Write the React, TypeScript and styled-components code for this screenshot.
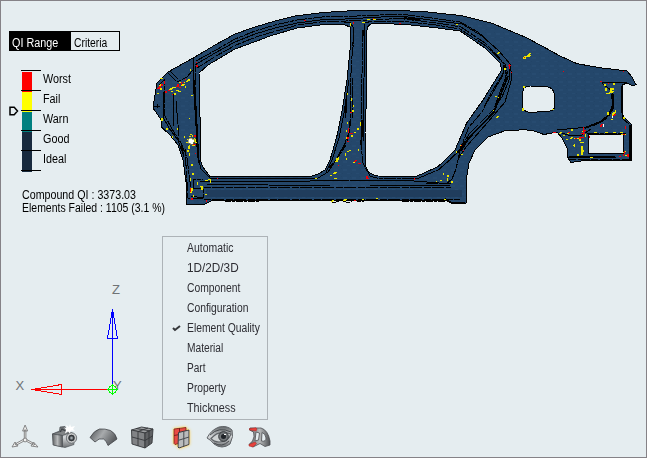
import React from "react";
import styled, { createGlobalStyle } from "styled-components";

const GlobalStyle = createGlobalStyle`
  * { box-sizing: border-box; }
  body { margin: 0; background: #e5edf0; overflow: hidden; }
`;

const Frame = styled.main`
  width: 647px;
  height: 458px;
  border: 1px solid #858287;
  background: #e5edf0;
  color: #000;
  font: 12px/13px "Liberation Sans", Arial, sans-serif;
  white-space: nowrap;
  overflow: hidden;
`;
const Condensed = styled.span<{ $width: number }>`
  display: inline-block;
  transform: scaleX(${(p) => p.$width});
  transform-origin: left center;
`;
const ModelView = styled.section`
  display: flex;
  height: 235px;
`;
const QualityPanel = styled.div`
  width: 149px;
  flex: none;
  padding: 30px 0 0 8px;
`;
const Tabs = styled.div`
  display: flex;
  width: 111px;
  height: 20px;
  border: 1px solid #000;
  background: #e5edf0;
`;
const Tab = styled.div<{ $active?: boolean }>`
  width: ${(p) => (p.$active ? 61 : 48)}px;
  flex: none;
  padding: 4px 0 0 ${(p) => (p.$active ? 2 : 3)}px;
  line-height: 14px;
  background: ${(p) => (p.$active ? "#000" : "transparent")};
  color: ${(p) => (p.$active ? "#fff" : "#000")};
`;
const Legend = styled.div`
  display: flex;
  margin-top: 19px;
  height: 101px;
`;
const Scale = styled.svg`
  display: block;
  width: 33px;
  height: 103px;
`;
const Labels = styled.div`
  padding-left: 1px;
  line-height: 18px;
`;
const Label = styled.div`
  height: 20px;
`;
const Stats = styled.div`
  margin: 18px 0 0 13px;
`;
const Stat = styled.div`
  height: 13px;
`;
const CarDrawing = styled.svg`
  display: block;
  flex: none;
`;
const Lower = styled.section`
  display: flex;
  height: 184px;
`;
const Axes = styled.svg`
  display: block;
  flex: none;
`;
const Menu = styled.ul`
  width: 106px;
  height: 184px;
  margin: 0;
  padding: 1px 0;
  border: 1px solid #adb3b7;
  list-style: none;
  color: #2d2d33;
`;
const MenuItem = styled.li`
  display: flex;
  align-items: center;
  height: 20px;
  line-height: 20px;
`;
const CheckSlot = styled.span`
  display: flex;
  flex: none;
  width: 24px;
  padding-left: 9px;
`;
const Toolbar = styled.nav`
  display: flex;
  height: 36px;
  padding: 3px 0 0 4px;
`;
const ToolButton = styled.div`
  width: 39px;
  height: 28px;
  display: flex;
  justify-content: center;
`;

const bands = [
  { name: "Worst", color: "#ff0000" },
  { name: "Fail", color: "#ffff00" },
  { name: "Warn", color: "#008080" },
  { name: "Good", color: "#182a3e" },
  { name: "Ideal", color: "#182a3e" },
];

const menuItems: [string, number][] = [
  ["Automatic", 0.87],
  ["1D/2D/3D", 0.98],
  ["Component", 0.86],
  ["Configuration", 0.86],
  ["Element Quality", 0.86],
  ["Material", 0.85],
  ["Part", 0.84],
  ["Property", 0.86],
  ["Thickness", 0.9],
];

const body =
  "M153 108L155 95 157 83 168 72 195 57 215 45 235 34 255 27 275 21 295 16 323 12.5 347 11 400 10.5 428 12 462 15.7 492 23.3 525 37 542 46 560 56 577 63.7 600 67.7 627 71 632 77 636 84.5 633 86 627 83 622 85 622 113 624 117 631 124 631 160.5 583 160.7 571 162.5 568 158 567 148 562 138 557 132 544 134.5 534 131 525 129.7 505 130.7 488 137 475 150 469 163 466.7 177 466 203.5 450 202.5 445 200 232 200.5 213 200 205 204 187 204.7 186.7 187 183 160 178 145 170 135 161 126.7 162 121Z";
const openings =
  "M270 36L297 28 320 25 344 24.5 350 27 351 32 350 50 347 80 341.7 113 336.7 137 330 160 325 170 317 174.5 310 176.7 210 176.5 203 167 200 160 200 117 199 73 208 65 235 49 255 41.7Z " +
  "M367 30Q367 24 374 23.5L405 24.3 438 28 460 31 485 48 500 63 501.7 70 483 100 466.7 123 455 150 438 166.7 421.7 174 415 176.7 378 176Q365 174 365 161L365 133 366.7 93Z " +
  "M524 88Q526 86 530 86L547 86.5Q553 88 554.5 94L554.5 108Q552 112 545 111.5L529 112.5Q523 111 522 106L522 94Z " +
  "M588.5 134.5L623.5 134.5 623.5 153.5 588.5 153.5Z";

const seams = [
  "M195 65L215 53 235 42 255 34 275 28 297 23 320 20 345 19 400 16 438 21 462 24 482 36 499 51 510 64 512 78 505 102 488 122 466 147 458 159",
  "M197 68L216 56 236 45 256 37 276 31 298 25 320 22 346 21 400 18.5 437 23 461 27 485 43 505 64 508 74",
  "M196 61L216 50 235 39 255 31 275 25 297 20 322 17 347 16.5 400 14 432 18 460 22 478 32 488 41",
  "M194 58L193 78 195 110 198 158 201 169 210 178 318 178 328 172 336 160 345 143 350 130",
  "M195 65L196 110 199 162",
  "M168 73L177 82 187 77 194 69M170 71L179 80M159 85L164 80 164 92 165 116 172 129 181 143 187 158 191 190",
  "M163 92L163 117 169 128 178 140 184 157M173 94L174 126M176 101L179 136",
  "M154 106L160 106M157 104L157 108M181 144L184 155M185 149L188 198 205 198",
  "M190 188L203 189 203 198M191 196L203 198M193 188L193 179 203 179",
  "M200 181L310 181 350 180 402 180 451 184M206 184L330 186 370 186 451 185M210 178L310 178",
  "M204 187L318 187 451 187M204 199L330 199 460 200",
  "M354 29L352 56 350 91 350 126",
  "M349 80L344 113 339 138 332 160 326 172M345 99L345 118M347 93L346 113",
  "M352 78L352 118M350 121L348 139 341 151M346 145L337 159 327 170",
  "M363 30L362 74 361 145 363 163 370 176 380 179 419 178 440 169 457 153 471 136 494 113 500 92 507 75 504 65",
  "M365 29L364 78 363 143 363 163",
  "M372 21L365 23 363 37M344 22L350 22 354 29 353 48",
  "M374 21L400 21 436 25 460 29 486 46 503 63 504 72 491 93 482 112 469 127 460 149 450 160 439 169",
  "M503 75L489 99 484 107M509 67L510 78 502 97 496 105 493 114 467 140 460 151",
  "M505 67L505 79 499 95 494 109 469 134 458 153",
  "M460 151L456 169 452 179 446 184M426 183L451 184",
  "M602 84L602 82 627 83M603 84L612 91 613 104 609 115 599 123 588 127 557 130",
  "M611 94L614 108 605 120 593 126M622 85L622 118 630 125 630 159 570 159",
  "M568 157L617 157M587 133L626 133",
  "M562 133L571 136 582 135 591 129M623 85L627 83",
];

/* Failed elements: x, y, width, height in model view pixels. */
const yellow =
  "159,84,4,2 160,88,2,2 169,88,4,2 172,87,4,1 181,84,4,2 186,80,3,2 188,79,2,2 160,78,3,1 174,93,2,2 178,91,3,1 183,82,2,1 185,86,1,2 190,69,1,2 157,93,2,1 171,91,2,1 176,90,3,1 179,82,3,1 161,118,2,3 166,128,2,2 172,136,1,2 177,128,1,2 188,146,2,3 187,150,2,2 189,153,1,3 191,164,2,2 192,173,2,2 190,178,1,3 197,182,1,3 201,187,2,3 191,188,2,3 190,191,2,2 205,180,3,1 210,180,1,3 193,195,1,2 205,194,2,1 184,136,1,2 194,139,2,3 189,118,1,1 191,95,2,1 190,134,2,1 200,186,3,1 208,179,3,1 347,93,1,2 351,98,1,3 352,110,2,2 347,122,1,2 353,105,1,2 360,122,1,4 357,128,2,2 354,132,2,1 346,137,2,2 346,130,1,2 351,135,2,2 347,151,2,1 345,153,1,3 346,158,1,2 338,157,1,3 335,161,3,1 336,158,2,4 333,172,4,2 330,175,2,1 334,178,3,1 349,150,2,1 353,162,2,1 358,149,1,2 331,200,3,2 343,199,4,2 362,199,2,1 376,198,2,1 350,23,1,3 362,22,3,1 367,19,3,1 373,19,3,1 456,24,2,1 497,52,3,2 504,68,2,2 495,96,2,1 498,97,1,1 493,110,1,1 496,116,3,2 460,145,2,1 461,154,2,1 456,151,1,2 443,173,1,2 447,175,2,2 451,181,2,2 436,181,1,1 440,180,2,1 447,178,1,3 315,178,2,1 444,199,2,1 523,56,4,3 526,55,5,2 528,53,3,4 522,108,2,3 523,86,2,2 552,109,2,1 604,84,2,2 605,88,2,3 609,91,5,2 612,88,2,2 606,93,4,1 610,88,2,3 613,83,2,2 612,112,4,4 615,110,1,2 607,112,2,3 611,119,2,1 623,117,2,2 574,138,5,1 579,138,2,3 581,146,2,9 582,131,3,1 585,134,1,3 574,144,1,3 567,132,3,2 559,132,3,2 570,137,3,2 563,135,2,1 566,139,2,1 571,129,2,2 594,132,3,1 605,132,3,1 613,132,3,1 620,132,3,1 621,134,5,1 623,151,3,2 625,155,4,1 577,154,2,2 573,145,2,1 590,157,3,1 580,142,4,1 583,150,1,2";
const red =
  "157,87,4,2 159,86,2,1 164,81,1,3 161,84,2,2 165,91,2,2 177,84,2,2 179,87,2,1 181,82,1,3 196,65,2,2 172,94,1,1 168,90,2,1 176,86,3,1 193,144,3,1 194,135,2,2 195,153,1,1 217,178,1,1 190,188,1,4 191,198,2,2 206,200,1,2 353,22,1,2 304,20,2,1 373,18,1,1 350,112,2,1 348,128,1,5 350,133,3,1 347,141,2,1 347,137,2,2 338,165,1,1 354,160,3,2 358,163,3,1 366,176,2,3 367,178,2,1 354,200,2,1 508,65,3,1 509,64,1,5 524,57,1,1 563,71,1,1 511,72,1,1 461,145,1,1 463,150,1,1 600,81,2,1 608,83,1,1 613,114,3,2 623,134,2,1 583,127,1,8 581,133,4,1 583,130,3,2 580,137,4,1 600,124,3,3 625,126,1,3 624,151,1,3 627,154,2,3 619,156,2,1 589,136,1,2 579,137,2,2 575,138,2,1 568,132,2,1 553,132,3,1 623,154,1,2 414,178,1,2 399,23,2,1 623,71,1,1 183,82,1,1 185,79,1,1 196,62,1,1";

function Marks({ data, fill }: { data: string; fill: string }) {
  return (
    <g fill={fill}>
      {data.split(" ").map((mark, i) => {
        const [x, y, width, height] = mark.split(",").map(Number);
        const skip = width > 2 && height > 1 ? 1 : 0;
        return <path key={i} d={`M${x + skip} ${y}h${width - skip}v1h${-skip}v${height - 1}h${skip - width}v${1 - height}h${skip}z`} />;
      })}
    </g>
  );
}

function CarSide() {
  return (
    <CarDrawing width="495" height="219" viewBox="150 1 495 219" shapeRendering="crispEdges">
      <defs>
        <pattern id="mesh" width="9" height="8" patternUnits="userSpaceOnUse">
          <path fill="#24476b" d="M0 0h9v8H0z" />
          <path fill="#274b70" d="M1 1h4v2H1zM5 5h3v1H5z" />
          <path fill="#224467" d="M8 0h1v1H8zM0 5h1v1H0z" />
        </pattern>
      </defs>
      <path d={body + openings} fill="url(#mesh)" fillRule="evenodd" />
      <path d="M206 193H462" stroke="#203d5d" strokeWidth="7" />
      <g fill="none" stroke="#000">
        <path d={body + openings} />
        {seams.map((d, i) => (
          <path key={i} d={d} strokeDasharray={i % 3 === 1 ? "7 1 12 2" : i % 3 === 2 ? "12 1 4 1" : undefined} />
        ))}
        <path d="M194 80L196 111 198 150M363 120L361 145M508 76L494 112 468 139 461 151M404 18L420 20M197 143L199 163M613 94V105L609 115 600 122 585 128M622 86V113M630 125V159M569 157L615 157" strokeWidth="1.7" />
        <path d="M213 201L220 199 228 202 235 201 260 201 311 200M322 201L328 199 334 203 341 200 348 203 354 200 361 202 367 200 390 200 402 201 445 201" strokeDasharray="7 1 3 1" />
        <path d="M445 199L452 203H465" strokeWidth="1.5" />
      </g>
      <Marks data={yellow} fill="#e8e500" />
      <Marks data={red} fill="#f20008" />
      <path d="M187 139h1v1h-1zM189 136h2v1h-2zM192 135h1v2h-1zM194 138h1v1h-1zM195 142h2v1h-2zM186 142h2v1h-2zM189 145h1v2h-1zM192 145h3v1h-3z" fill="#e8dd00" />
      <path d="M189 138h3v1h2v3h-1v2h-3v-1h-2v-4h1z" fill="#fff" stroke="#8b862c" strokeWidth=".6" />
      <path d="M603 124h1v3h-1zM612 116h1v2h-1z" fill="#fff" />
    </CarDrawing>
  );
}

function LegendScale() {
  return (
    <Scale viewBox="9 70 33 103" shapeRendering="crispEdges">
      {bands.map((band, i) => (
        <rect key={band.name} x="22" y={72 + i * 20} width="10" height="20" fill={band.color} />
      ))}
      {[0, 1, 2, 3, 4, 5].map((i) => (
        <rect key={i} x="21" y={70 + i * 20} width="20" height="1" />
      ))}
      <path d="M10 107.2h4.2l3.3 3.8-3.3 3.8H10z" fill="#e5edf0" stroke="#000" strokeWidth="1.5" shapeRendering="geometricPrecision" />
    </Scale>
  );
}

function AxisTriad() {
  return (
    <Axes width="161" height="184" viewBox="1 236 161 184" shapeRendering="crispEdges">
      <g fill="none" strokeWidth="1">
        <path stroke="#00f" d="M112.5 310V389M112.5 309L107.5 338.5H117.5ZM111.5 313V318M113.5 313V318" />
        <path stroke="red" d="M31 389.5H112M35 389L61.5 384.5V394.5L35 390M35 388.5H41M35 390.5H41" />
      </g>
      <g fill="#6f7376" fontFamily="Liberation Sans" fontSize="13" shapeRendering="geometricPrecision">
        <text x="112" y="294" textLength="8" lengthAdjust="spacingAndGlyphs">Z</text>
        <text x="15.5" y="390">X</text>
        <text x="113" y="390">Y</text>
      </g>
      <path d="M107 389.5H118M112.5 384V395M112.5 384.5L117.5 389.5 112.5 394.5 107.5 389.5Z" fill="none" stroke="#0f0" shapeRendering="geometricPrecision" />
      <path d="M109 386h1v1h-1zM115 386h1v1h-1zM109 392h1v1h-1zM115 392h1v1h-1z" fill="#0f0" />
    </Axes>
  );
}

function ToolIcon({ kind }: { kind: number }) {
  return (
    <svg width="30" height="28" viewBox="0 0 30 28" overflow="visible">
      {kind === 0 && (
        <g fill="#f1f1ef" stroke="#7a7b7c" strokeWidth=".9">
          <path d="M14.3 7h1.6v10h-1.6zM14 16l-9 5 1 1.3 9-4.8zM15 17.5l9 4.8.8-1.3-9-5zM12.6 8l2.5-6 2.5 6zM2 24l3-5 3 4zM28 24l-4.5-5-2.5 4z" />
          <circle cx="15.1" cy="17" r="1.9" />
        </g>
      )}
      {kind === 1 && (
        <g stroke="#4c5055" strokeWidth=".7">
          <path fill="url(#metal)" d="M3.5 11l7-3 .5-4 5-.5 2 4 6 3 1 11-9 3-11-2.5z" />
          <path fill="#828587" d="M3.5 11l10 1.5 8-3-7-2z" />
          <path fill="url(#steel)" d="M3.5 11l10 1.5V24l-9.5-2z" />
          <path fill="none" stroke="#3b3f43" strokeWidth="1.2" d="M11 9l2-3 4 2" />
          <circle cx="22.5" cy="15" r="5.2" fill="#c9cccd" />
          <circle cx="22.5" cy="15" r="3.8" fill="#303438" stroke="#eee" />
          <circle cx="22.5" cy="15" r="1.7" fill="#9da5aa" />
          <path fill="#fff" stroke="none" d="M17 2l3 2 1-3 1 3 4-1-2 3 2 2-4-.5-1 3-2-2-3 2 1-4-2-2 3 .5z" />
        </g>
      )}
      {kind === 2 && (
        <path fill="url(#sheet)" stroke="#404346" strokeWidth=".8" strokeLinejoin="round" d="M2 14.5Q6 7.5 11.5 6Q17 5.5 22.5 7.5Q27.5 10 29 16L20 22.5Q18.5 17.5 15.5 16Q11 14.5 7 19Z" />
      )}
      {kind === 3 && (
        <g stroke="#36383b" strokeWidth=".9">
          <path fill="#9b9d9f" d="M4.5 7l10-3 11.5 2-8 4z" />
          <path fill="#818386" d="M4.5 7L18 10v15l-13-4z" />
          <path fill="#5f6164" d="M18 10l8-4-1 14-7 5z" />
          <path fill="none" d="M11 8.5V23M22 8v14M5 14l13 3.5 7.5-4.5M9 5.5l13.5 2.3M21 5l-10 3.5" />
        </g>
      )}
      {kind === 4 && (
        <g strokeWidth="1" filter="url(#selected)">
          <path fill="#e84a42" stroke="#8b2723" d="M8 6l12-1.5v14L9 21.5l-1-1z" />
          <path fill="none" stroke="#7b1d1e" d="M13.5 5v14M8 12.5l11-2" />
          <path fill="#b9bbbc" stroke="#373c41" d="M12.5 9.5L23 7v14.5l-10 3.5-1-1z" />
          <path fill="none" stroke="#484c50" d="M17.8 8.5v15M12.5 17.3L23 14" />
        </g>
      )}
      {kind === 5 && (
        <g fill="none" stroke="#606468">
          <path fill="url(#metal)" d="M2 15Q6 7 14 4Q22 2 27 7Q29 13 25 21Q17 27 9 21Q6 17 2 15Z" />
          <path fill="#cfd3d4" strokeWidth="1.2" d="M6 15.5Q14 6 26 11Q23 19 14 19Q9 19 6 15.5Z" />
          <circle cx="18.5" cy="13.5" r="4.8" fill="#73777a" stroke="#34383b" />
          <circle cx="18.5" cy="13.5" r="2.5" fill="#202429" stroke="none" />
          <path stroke="#fff" d="M19 11.5h2" />
          <path stroke="#474b4e" strokeWidth="1" d="M5 12Q14 3 26 9M9 20Q17 25 24 18" />
        </g>
      )}
      {kind === 6 && (
        <g stroke="#4b4d50" strokeWidth=".8">
          <path fill="url(#steel)" fillRule="evenodd" d="M6 5H17Q24 7 26 18V22L21 23.5 16 20.5 9 24 5 21.5 8.5 18Q11 14 9.5 9L5.5 7ZM12 9L11 18 14.5 17 15.5 10ZM18 9.5L17.5 18Q22 19 22 15 21.5 10.5 18 9.5Z" />
          <path fill="#e7423c" stroke="#a42827" strokeWidth=".5" d="M5.5 5.5L12 4.8l1 1.2-1 2-6.5-1zM5 21.5L11 19l1.5 1.5L9 24l-4-1z" />
        </g>
      )}
    </svg>
  );
}

export default function App() {
  return (
    <Frame>
      <GlobalStyle />
      <ModelView>
        <QualityPanel>
          <Tabs>
            <Tab $active><Condensed $width={0.9}>QI Range</Condensed></Tab>
            <Tab><Condensed $width={0.86}>Criteria</Condensed></Tab>
          </Tabs>
          <Legend>
            <LegendScale />
            <Labels>{bands.map((band) => <Label key={band.name}><Condensed $width={0.9}>{band.name}</Condensed></Label>)}</Labels>
          </Legend>
          <Stats>
            <Stat><Condensed $width={0.89}>Compound QI : 3373.03</Condensed></Stat>
            <Stat><Condensed $width={0.873}>Elements Failed : 1105 (3.1 %)</Condensed></Stat>
          </Stats>
        </QualityPanel>
        <CarSide />
      </ModelView>
      <Lower>
        <AxisTriad />
        <Menu>
          {menuItems.map(([name, width]) => (
            <MenuItem key={name}>
              <CheckSlot>
                {name === "Element Quality" && (
                  <svg width="9" height="8" viewBox="0 0 9 8"><path d="M1 4l2 2 5-4" fill="none" stroke="#36383b" strokeWidth="2" /></svg>
                )}
              </CheckSlot>
              <Condensed $width={width}>{name}</Condensed>
            </MenuItem>
          ))}
        </Menu>
      </Lower>
      <Toolbar>
        {[0, 1, 2, 3, 4, 5, 6].map((kind) => <ToolButton key={kind}><ToolIcon kind={kind} /></ToolButton>)}
        <svg width="0" height="0">
          <defs>
            <linearGradient id="steel"><stop stopColor="#606264" /><stop offset=".5" stopColor="#b8babb" /><stop offset="1" stopColor="#505356" /></linearGradient>
            <linearGradient id="sheet" x2="1" y2=".4"><stop stopColor="#4b4e51" /><stop offset=".5" stopColor="#a8abad" /><stop offset="1" stopColor="#5b5e61" /></linearGradient>
            <linearGradient id="metal" x2="0" y2="1"><stop stopColor="#606467" /><stop offset=".5" stopColor="#d5d8da" /><stop offset="1" stopColor="#6e7174" /></linearGradient>
            <filter id="selected" x="-40%" y="-40%" width="180%" height="180%"><feDropShadow dx="0" dy="0" stdDeviation="1.8" floodColor="#ffc832" floodOpacity="1" /></filter>
          </defs>
        </svg>
      </Toolbar>
    </Frame>
  );
}
